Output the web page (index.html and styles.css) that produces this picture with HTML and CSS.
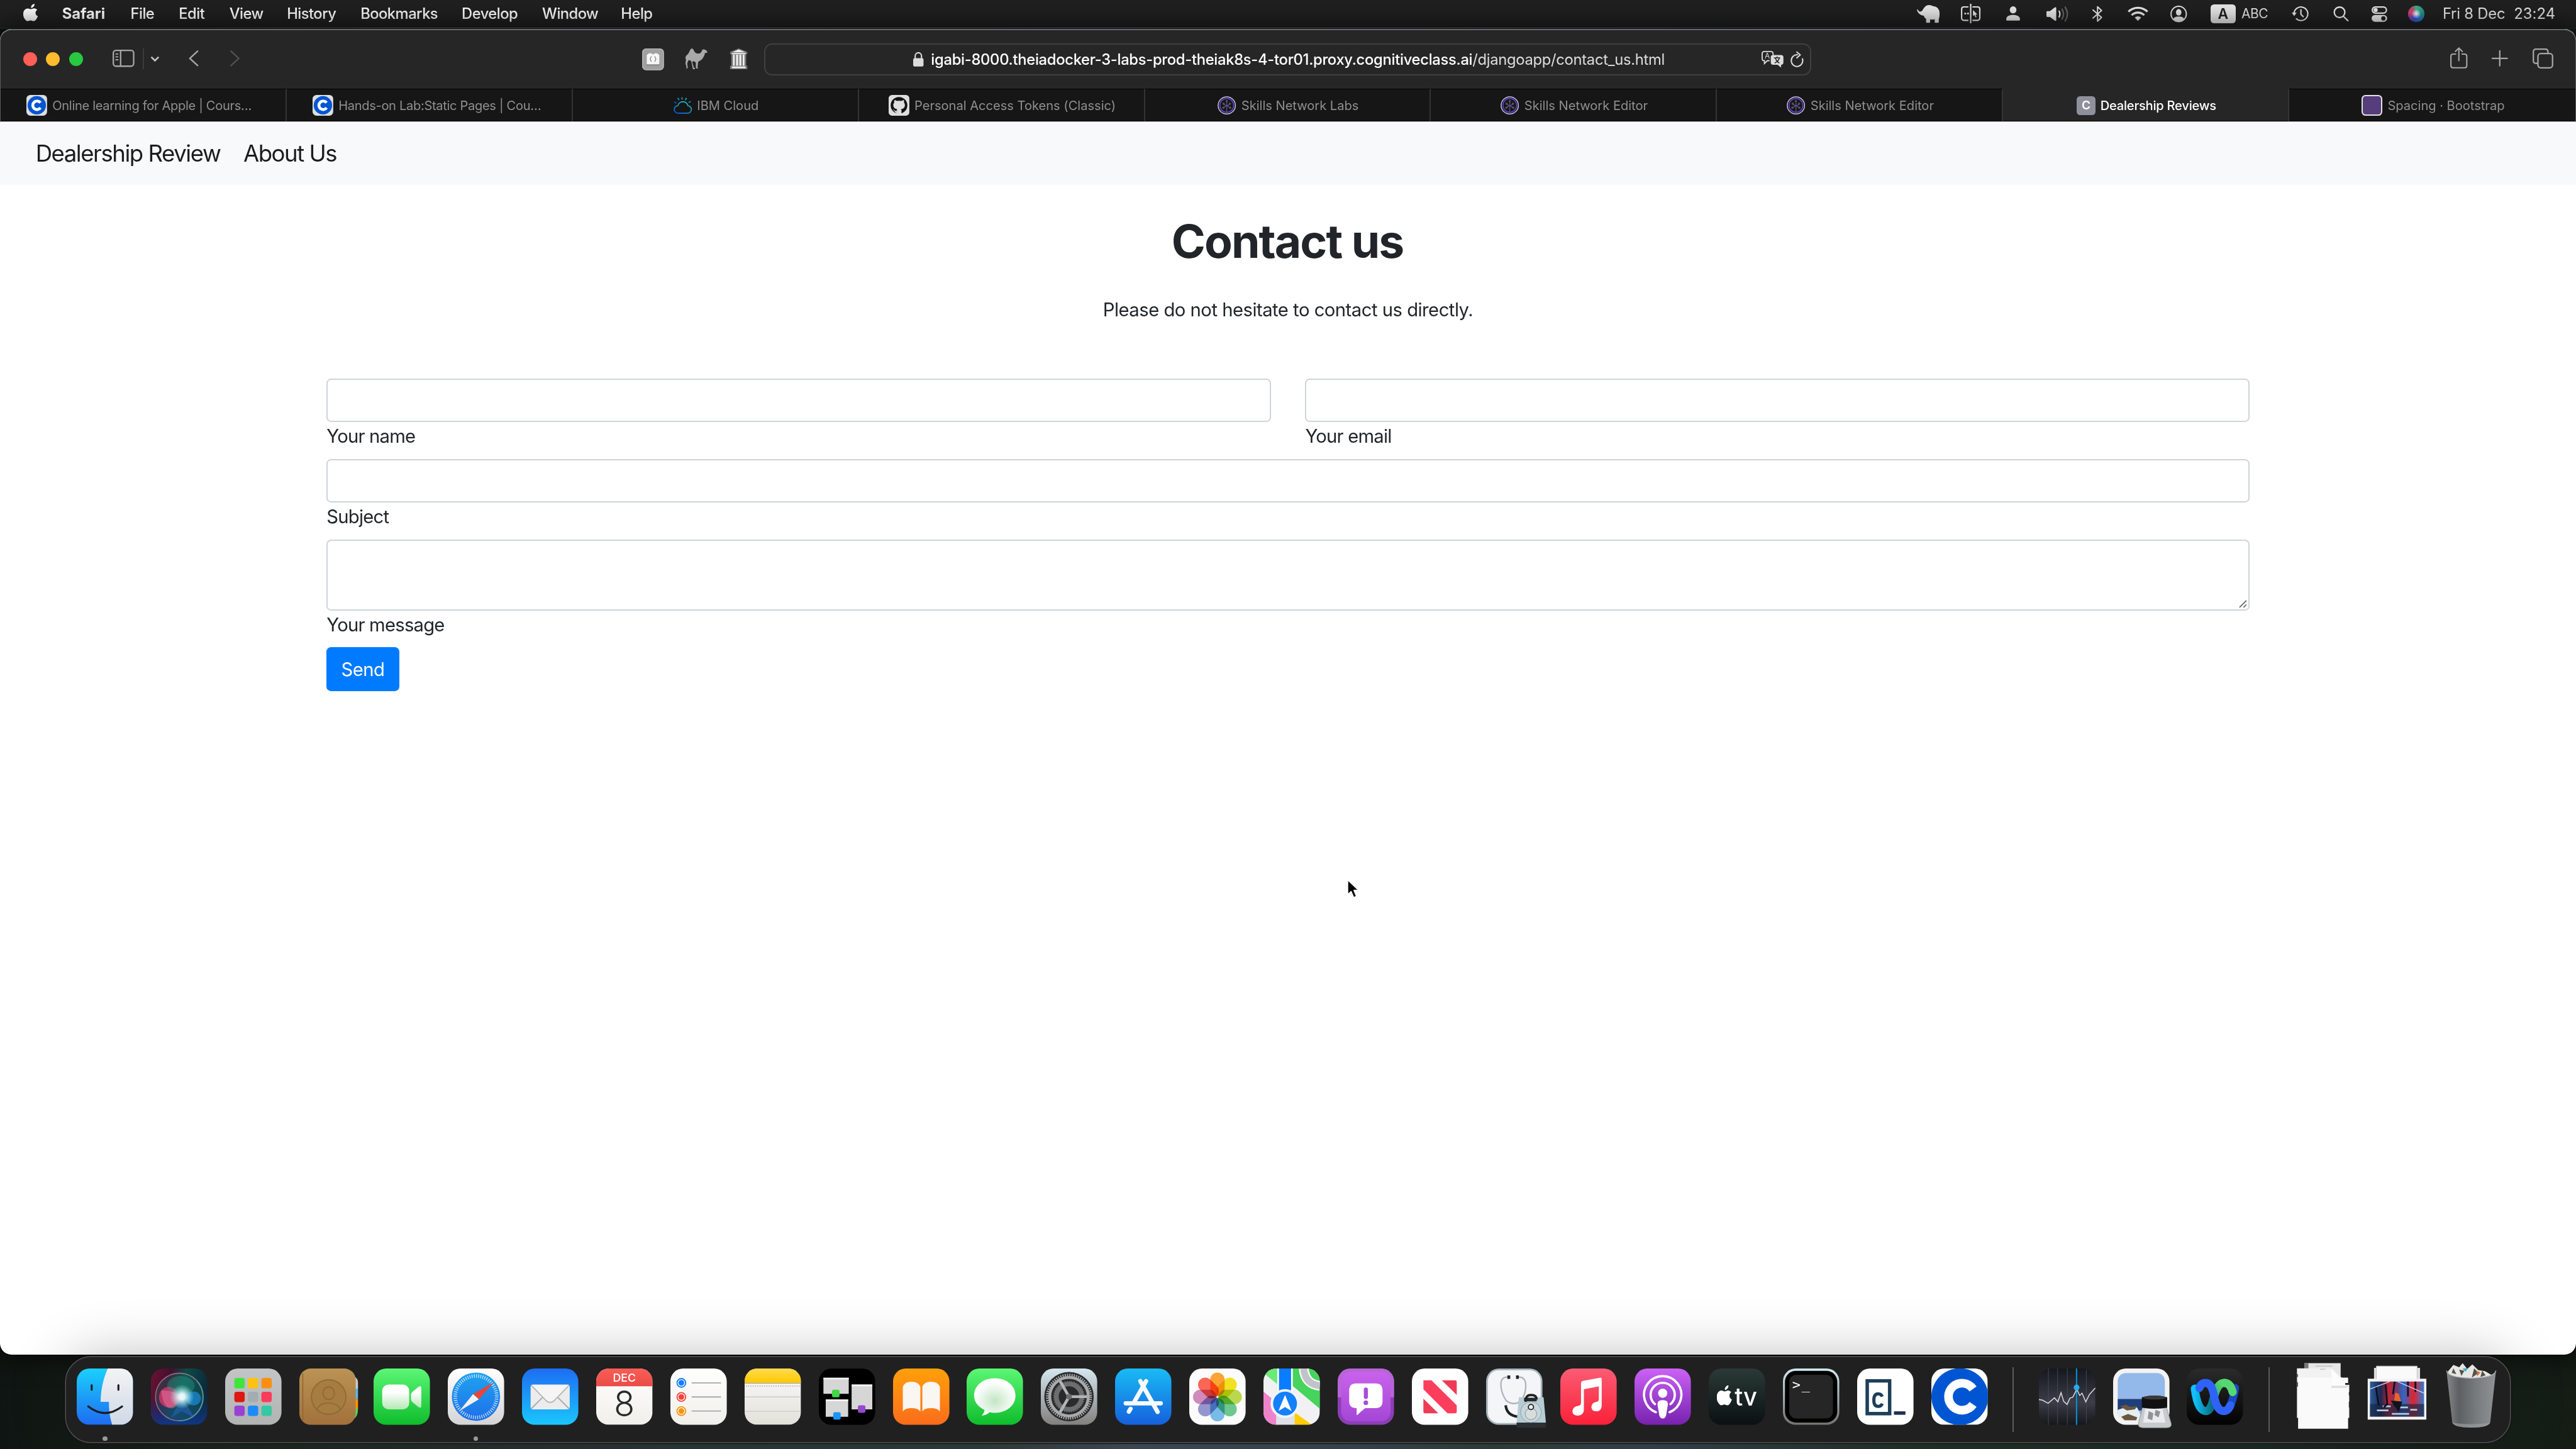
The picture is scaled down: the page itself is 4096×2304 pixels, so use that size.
FILE: index.html
```html
<!DOCTYPE html>
<html lang="en">
<head>
<meta charset="utf-8">
<title>Dealership Reviews</title>
<link rel="stylesheet" href="styles.css">
</head>
<body>
<div class="desktop">
<svg class="defs" width="0" height="0" aria-hidden="true">
  <defs>
    <linearGradient id="gFinder" x2="0" y2="1"><stop stop-color="#1bd0fd"/><stop offset="1" stop-color="#1e6bf1"/></linearGradient>
    <linearGradient id="gFinderR" x2="0" y2="1"><stop stop-color="#f3f3f5"/><stop offset="1" stop-color="#cfd9e6"/></linearGradient>
    <linearGradient id="gSiri" x2="1" y2=".25"><stop stop-color="#6d1233"/><stop offset=".35" stop-color="#43102f"/><stop offset=".6" stop-color="#0e4a46"/><stop offset="1" stop-color="#0b2a3c"/></linearGradient>
    <linearGradient id="gSiriB" x2="0" y2="1"><stop offset=".5" stop-color="#10307a" stop-opacity="0"/><stop offset="1" stop-color="#123584"/></linearGradient>
    <radialGradient id="gGlow"><stop stop-color="#fff"/><stop offset=".25" stop-color="#eafcff"/><stop offset="1" stop-color="#9ff" stop-opacity="0"/></radialGradient>
    <linearGradient id="gGrey" x2="0" y2="1"><stop stop-color="#c3c4c5"/><stop offset="1" stop-color="#b2b3b3"/></linearGradient>
    <linearGradient id="gBrown" x2="0" y2="1"><stop stop-color="#bb9355"/><stop offset="1" stop-color="#a1713b"/></linearGradient>
    <linearGradient id="gGreen" x2="0" y2="1"><stop stop-color="#5bf675"/><stop offset="1" stop-color="#0fbd2c"/></linearGradient>
    <linearGradient id="gWhite" x2="0" y2="1"><stop stop-color="#fff"/><stop offset="1" stop-color="#d4d4d4"/></linearGradient>
    <linearGradient id="gCam" x2="0" y2="1"><stop offset=".3" stop-color="#fff"/><stop offset="1" stop-color="#b5e8b6"/></linearGradient>
    <linearGradient id="gCompass" x2="0" y2="1"><stop stop-color="#1fa3f1"/><stop offset="1" stop-color="#1f6fe8"/></linearGradient>
    <linearGradient id="gMail" x2="0" y2="1"><stop stop-color="#1d6df3"/><stop offset="1" stop-color="#1bc6fd"/></linearGradient>
    <linearGradient id="gRed" x2="0" y2="1"><stop stop-color="#fc5d57"/><stop offset="1" stop-color="#e94c46"/></linearGradient>
    <linearGradient id="gPaper" x2="0" y2="1"><stop stop-color="#fff"/><stop offset="1" stop-color="#f0efea"/></linearGradient>
    <linearGradient id="gYellow" x2="0" y2="1"><stop stop-color="#ffdb4f"/><stop offset="1" stop-color="#ffc800"/></linearGradient>
    <linearGradient id="gNote" x2="0" y2="1"><stop stop-color="#fbfaf9"/><stop offset="1" stop-color="#e2e1da"/></linearGradient>
    <linearGradient id="gOrange" x2="0" y2="1"><stop stop-color="#ffa00b"/><stop offset="1" stop-color="#fb6c1b"/></linearGradient>
    <linearGradient id="gGear" x2="0" y2="1"><stop stop-color="#d6e6ef"/><stop offset="1" stop-color="#82807e"/></linearGradient>
    <radialGradient id="gBubble" cy=".6"><stop stop-color="#c3e6c4"/><stop offset="1" stop-color="#fff"/></radialGradient>
    <linearGradient id="gStore" x2="0" y2="1"><stop stop-color="#19bbf4"/><stop offset="1" stop-color="#1560dd"/></linearGradient>
    <linearGradient id="gPurple" x2="0" y2="1"><stop stop-color="#c962ec"/><stop offset="1" stop-color="#a447d6"/></linearGradient>
    <linearGradient id="gPod" x2="0" y2="1"><stop stop-color="#cb62f6"/><stop offset="1" stop-color="#7722ae"/></linearGradient>
    <linearGradient id="gMusic" x2="0" y2="1"><stop stop-color="#fb5c74"/><stop offset="1" stop-color="#fa2138"/></linearGradient>
    <linearGradient id="gTv" x2="0" y2="1"><stop stop-color="#2a3a35"/><stop offset="1" stop-color="#0b1013"/></linearGradient>
    <linearGradient id="gTerm" x2="0" y2="1"><stop stop-color="#cfe9f0"/><stop offset="1" stop-color="#74726f"/></linearGradient>
    <linearGradient id="gVoice" x2="0" y2="1"><stop stop-color="#15181d"/><stop offset=".6" stop-color="#3b3d49"/><stop offset="1" stop-color="#15171b"/></linearGradient>
    <linearGradient id="gWebex" x2="0" y2="1"><stop stop-color="#2b2b2b"/><stop offset="1" stop-color="#020202"/></linearGradient>
    <linearGradient id="gCyan" x2="1" y2="0"><stop stop-color="#0fc0fa"/><stop offset="1" stop-color="#0a6a76"/></linearGradient>
    <linearGradient id="gLime" x1="0" y1="1" x2="1" y2="0"><stop stop-color="#0b8f87"/><stop offset="1" stop-color="#6be563"/></linearGradient>
    <linearGradient id="gCloud" x1="0" y1="1" x2=".6" y2="0"><stop stop-color="#0f4fd0"/><stop offset="1" stop-color="#23b3b0"/></linearGradient>
    <linearGradient id="gTrash" x2="1" y2="0"><stop stop-color="#85898c"/><stop offset=".25" stop-color="#5c6063"/><stop offset=".6" stop-color="#777b7e"/><stop offset="1" stop-color="#8f9396"/></linearGradient>
    <linearGradient id="gScene" x2="1" y2="0"><stop stop-color="#2a5c9c"/><stop offset=".2" stop-color="#1b2850"/><stop offset=".35" stop-color="#c32434"/><stop offset=".5" stop-color="#6d3a6a"/><stop offset=".62" stop-color="#2b68c8"/><stop offset=".8" stop-color="#e3222b"/><stop offset="1" stop-color="#2f7ad0"/></linearGradient>
    <clipPath id="sq"><rect width="98" height="98" rx="22"/></clipPath>
    <symbol id="coursera" viewBox="0 0 36 36"><rect width="36" height="36" rx="7" fill="#dedede"/><circle cx="18" cy="18" r="16" fill="#0056d2"/><path d="M24.4 13.6A7.4 7.4 0 1 0 24.4 22.4" fill="none" stroke="#fff" stroke-width="5"/></symbol>
    <symbol id="skills" viewBox="0 0 32 32"><g fill="none"><circle cx="16" cy="16" r="15" stroke="#c9c3ea" stroke-width="1.6"/><circle cx="16" cy="16" r="12" stroke="#6344c9" stroke-width="1.8"/><path d="M16 9v18M10 20l6-4 6 4M11 14l5 3 5-3" stroke="#55518a" stroke-width="1.6"/></g><g fill="#55565c"><circle cx="16" cy="8.500" r="2"/><circle cx="10.500" cy="13" r="2"/><circle cx="21.500" cy="13" r="2"/><circle cx="10" cy="20" r="2"/><circle cx="22" cy="20" r="2"/></g></symbol>
    <symbol id="apple" viewBox="0 0 28 32"><path d="M19.600 0c.2 2.200-.7 4-1.900 5.300-1.200 1.400-2.700 2-4.200 1.900-.2-2 .7-3.800 1.800-5C16.500 1 18.200.1 19.600 0zM24.300 10.700c-2 1.200-3 3-3 5.200 0 2.600 1.600 4.700 4 5.600-.5 1.600-1.300 3.200-2.300 4.700-1.400 2.100-2.900 4-5.100 4-2.100 0-2.800-1.200-5.200-1.200-2.500 0-3.300 1.200-5.300 1.200-2.200 0-3.800-2.200-5.200-4.200C-.6 21.700-1 15 1.800 11.300c1.500-2 3.700-3.200 5.900-3.200 2.300 0 3.800 1.300 5.600 1.300s3.100-1.400 5.700-1.400c1.900 0 4 1 5.300 2.700z" fill="currentColor"/></symbol>
  </defs>
</svg>

<header class="menubar">
  <svg class="apple" width="28" height="32"><use href="#apple"/></svg>
  <nav class="menus">
    <span class="app-name">Safari</span><span>File</span><span>Edit</span><span>View</span><span>History</span><span>Bookmarks</span><span>Develop</span><span>Window</span><span>Help</span>
  </nav>
  <div class="status">
    <svg class="w40" viewBox="0 0 40 31"><path d="M0 8.500Q.8 7 2 8.500 4 13.500 9 10 12 5 14.500 2.500 17.500 0 21 0 25 0 28 2 39.500 3 39.500 15 39.500 21 38 25v4.500q0 1.500-1.500 1.500H32q-1 0-1-1.500V25q-4 1-8 0v4.500q0 1.500-1.500 1.500h-4Q16 31 16 29.500V24Q12.500 22 12 18.500 3 18 0 8.500z" fill="currentColor"/></svg>
    <svg class="ml36 w34" viewBox="0 0 34 34"><g fill="none" stroke="currentColor" stroke-width="2.400"><path d="M17 0v34M13 5.500H5A3.800 3.800 0 0 0 1.200 9v16A3.800 3.800 0 0 0 5 28.800h8M20 5.500h9A3.800 3.800 0 0 1 32.800 9v16a3.800 3.800 0 0 1-3.800 3.800h-9"/></g><circle cx="7.500" cy="17" r="1.700" fill="currentColor"/><circle cx="12.300" cy="17" r="1.700" fill="currentColor"/><path d="M21 11l7.500 7.500-3.300.3 2 4.300-1.700.8-2-4.500-2.500 2z" fill="currentColor"/></svg>
    <svg class="ml45 w24" viewBox="0 0 24 26"><g fill="currentColor"><ellipse cx="12" cy="6.200" rx="5.800" ry="6.200"/><path d="M0 23c0-5.500 5-8 12-8s12 2.500 12 8c0 1.500-1 2-2.500 2h-19C1 25 0 24.500 0 23z"/></g></svg>
    <svg class="ml46 w38" viewBox="0 0 38 27"><path d="M1.500 8.500H6L14.500 2Q17 .8 17 3v21q0 2.200-2.500 1L6 18.500H1.500Q0 18.500 0 17v-7q0-1.500 1.500-1.500z" fill="currentColor"/><g fill="none" stroke="currentColor" stroke-width="2.400" stroke-linecap="round"><path d="M22 8.500q2.800 5 0 10"/><path d="M27 5q5.500 8.500 0 17" opacity=".35"/><path d="M32.500 1.500q8 12 0 24" opacity=".35"/></g></svg>
    <svg class="ml42 w18" viewBox="0 0 18 29"><path d="M1 7.500l15 13L9 27V2l7 6.500L1 21.500" fill="none" stroke="currentColor" stroke-width="2.200" stroke-linejoin="round" stroke-linecap="round"/></svg>
    <svg class="ml43 w36" viewBox="0 0 36 26"><g fill="none" stroke="currentColor" stroke-width="3.600"><path d="M1.500 9.500a23.300 23.300 0 0 1 33 0"/><path d="M7 15.500a15.500 15.500 0 0 1 22 0"/></g><path d="M18 25.500l-5.500-5.700a8 8 0 0 1 11 0z" fill="currentColor"/></svg>
    <svg class="ml38 w29" viewBox="0 0 29 29"><circle cx="14.500" cy="14.500" r="13.300" fill="none" stroke="currentColor" stroke-width="2.200"/><g fill="currentColor"><ellipse cx="14.500" cy="11.500" rx="4.800" ry="5.600"/><path d="M5 23.500q1.500-4.500 9.500-4.500t9.500 4.500Q20 28 14.500 28T5 23.500z"/></g></svg>
    <span class="input-src">A</span><span class="input-name">ABC</span>
    <svg class="ml43 w29" viewBox="0 0 29 26"><g fill="none" stroke="currentColor" stroke-width="2.300" stroke-linecap="round"><path d="M4 13A12 11.800 0 1 1 8 21.800"/><path d="M16 6v8l4 4"/></g><path d="M0 11h8.500L4.300 17z" fill="currentColor"/></svg>
    <svg class="ml43 w27" viewBox="0 0 27 26"><g fill="none" stroke="currentColor" stroke-width="2.600" stroke-linecap="round"><circle cx="11" cy="10.500" r="9.200"/><path d="M17.700 17.500L25.500 25"/></g></svg>
    <svg class="ml40 w27" viewBox="0 0 27 27"><rect x="1.200" y="1.200" width="24.600" height="10.600" rx="5.300" fill="none" stroke="currentColor" stroke-width="2.400"/><circle cx="7" cy="6.500" r="3.600" fill="currentColor"/><rect y="15" width="27" height="12" rx="6" fill="currentColor"/><circle cx="20.500" cy="21" r="3.800" fill="#202020"/></svg>
    <span class="siri-mini"></span>
    <span class="date">Fri 8 Dec</span><span class="time">23:24</span>
  </div>
</header>

<main class="window">
  <div class="chrome">
    <div class="toolbar">
      <span class="light red"></span><span class="light amber"></span><span class="light green"></span>
      <svg class="sidebar" width="38" height="30" viewBox="0 0 38 30"><g fill="none" stroke="#a6a6a6" stroke-width="2.500"><rect x="1.300" y="1.300" width="35.400" height="27.400" rx="4.500"/><path d="M14 1v28"/><path d="M5 7.500h5M5 12.500h5M5 17.500h5" stroke-width="2"/></g></svg>
      <span class="rule"></span>
      <svg class="chev" width="14" height="9" viewBox="0 0 14 9"><path d="M1.500 1.500L7 7l5.500-5.500" fill="none" stroke="#c4c4c4" stroke-width="3" stroke-linecap="round"/></svg>
      <svg class="back" width="17" height="28" viewBox="0 0 17 28"><path d="M15.500 1.500L2 14l13.500 12.500" fill="none" stroke="#a6a6a6" stroke-width="2.700" stroke-linecap="round" stroke-linejoin="round"/></svg>
      <svg class="fwd" width="17" height="28" viewBox="0 0 17 28"><path d="M1.500 1.500L15 14 1.500 26.500" fill="none" stroke="#505050" stroke-width="2.700" stroke-linecap="round" stroke-linejoin="round"/></svg>
      <svg class="brick" width="38" height="38" viewBox="0 0 38 38"><rect width="38" height="38" rx="7" fill="#a0a0a0"/><rect x="1" y="1" width="36" height="36" rx="6" fill="none" stroke="#b6b6b6" stroke-width="1.500"/><path d="M8 29v-17q0-2 2-2h1V8.500h6V10h4V8.500h6V10h1q2 0 2 2v17q0 1-1 1H9q-1 0-1-1z" fill="#8a8a8a"/><path d="M8 26V12q0-2 2-2h1V8.500h6V10h4V8.500h6V10h1q2 0 2 2v14q0 1.500-1.500 1.500h-19Q8 27.500 8 26z" fill="#f6f6f6"/><path d="M16.500 14c-2 0-1 4-3 4.500 2 .5 1 4.500 3 4.500M21.500 14c2 0 1 4 3 4.500-2 .5-1 4.500-3 4.500" fill="none" stroke="#777" stroke-width="1.300"/></svg>
      <svg class="camel" width="39" height="36" viewBox="0 0 39 36"><path d="M1 17c0-4 3-6 5-8 2-3 3-8 6-9 3 0 4 6 7 8 3 1 5 2 8 0 2-1 2-4 4-6 2-1 7 1 8 4 0 2-2 2-4 2-1 4-3 10-8 13-2 1-3 1-4 3l-1 9 1 2h-3l-1-2v-9l-5-2-1 3 3 9h2l-1 2h-3L11 22c-2-1-4-2-5-1l-2 5 1 7-1 2H2l1-2-2-7 1-6z" fill="#a9a9a9"/></svg>
      <svg class="museum" width="32" height="36" viewBox="0 0 32 36"><path d="M16 0l15 6v4h-2v20h2v6H1v-6h2V10H1V6z" fill="#777"/><path d="M16 2l11 4.500H5zM4 8h24v2H4zM6 11h3v19H6zM11.500 11h3.500v19h-3.500zM17 11h3.500v19H17zM23 11h3v19h-3zM4 31.500h24v3H4z" fill="#f0f0f0"/></svg>
      <div class="address">
        <svg width="18" height="25" viewBox="0 0 18 25"><rect y="10.500" width="18" height="14.500" rx="2.500" fill="#dcdcdc"/><path d="M3.500 11V6.500a5.500 5.500 0 0 1 11 0V11" fill="none" stroke="#dcdcdc" stroke-width="2.300"/></svg>
        <span class="url"><b>igabi-8000.theiadocker-3-labs-prod-theiak8s-4-tor01.proxy.cognitiveclass.ai</b>/djangoapp/contact_us.html</span>
        <svg class="translate" width="38" height="29" viewBox="0 0 38 29"><path d="M14 17h-4l-5 5v-5q-4 0-4-4V5q0-4 4-4h11q4 0 4 4v2" fill="none" stroke="#dcdcdc" stroke-width="2"/><text x="10" y="13.500" font-size="13" text-anchor="middle" fill="#dcdcdc">A</text><path d="M20 7h14q4 0 4 4v9q0 4-4 4v5l-6-5h-8q-4 0-4-4v-9q0-4 4-4z" fill="#dcdcdc"/><path d="M21.500 12h11M27 9.500V12M23 21c4-2 7-5 8-9M31 21c-4-2-6-5-7-9" fill="none" stroke="#262626" stroke-width="1.700"/></svg>
        <svg class="reload" width="23" height="27" viewBox="0 0 23 27"><path d="M20.800 12.500A10 10.200 0 1 1 12 5.600" fill="none" stroke="#dcdcdc" stroke-width="2.200" stroke-linecap="round"/><path d="M11 .8l6 5-6 5.200" fill="none" stroke="#dcdcdc" stroke-width="2.200" stroke-linecap="round" stroke-linejoin="round"/></svg>
      </div>
      <svg class="share" width="30" height="37" viewBox="0 0 30 37"><g fill="none" stroke="#a6a6a6" stroke-width="2.300" stroke-linecap="round" stroke-linejoin="round"><path d="M9.500 12H5q-3.800 0-3.800 3.800V32q0 3.800 3.800 3.800h20q3.800 0 3.800-3.800V15.800Q28.800 12 25 12h-4.500"/><path d="M15 23.500V1.500M9 7.500l6-6 6 6"/></g></svg>
      <svg class="plus" width="28" height="28" viewBox="0 0 28 28"><path d="M14 1v26M1 14h26" stroke="#a6a6a6" stroke-width="2.500" stroke-linecap="round"/></svg>
      <svg class="overview" width="36" height="35" viewBox="0 0 36 35"><g fill="none" stroke="#a6a6a6" stroke-width="2.500"><path d="M9 26H6q-4.700 0-4.700-4.700V6Q1.300 1.300 6 1.300h16Q26.700 1.300 26.700 6v3"/><rect x="9.300" y="9" width="25.400" height="24.700" rx="4.700"/></g></svg>
    </div>
    <div class="tabs">
      <div class="tab cut"><svg width="36" height="36"><use href="#coursera"/></svg><span>Online learning for Apple | Cours…</span></div>
      <div class="tab cut"><svg width="36" height="36"><use href="#coursera"/></svg><span>Hands-on Lab:Static Pages | Cou…</span></div>
      <div class="tab"><svg width="32" height="32" viewBox="0 0 32 32"><g fill="none" stroke="url(#gCloud)" stroke-width="2"><path d="M8 29.500a6.500 6.500 0 0 1-.5-13 9 9 0 0 1 17.500 0 6.500 6.500 0 0 1-1 13z"/><path d="M15 6l-.5-4M20.500 7l2-4M9.500 7l-2-4M26 11l4-2M5 12L1.500 10"/></g></svg><span>IBM Cloud</span></div>
      <div class="tab"><svg width="36" height="36" viewBox="0 0 36 36"><rect width="36" height="36" rx="6" fill="#dedede"/><circle cx="18" cy="18" r="14.500" fill="#111"/><path d="M14 33v-5c-4 1-4.500-2.500-6.500-3M22 33v-6c0-1-.3-2-1-2.500 4-.5 7-2 7-7 0-2-.6-3-1.600-4 .3-1.500.3-3-.2-4.300-1.500 0-3 .7-4.200 1.600a14 14 0 0 0-7.600 0c-1.200-.9-2.700-1.600-4.200-1.600-.5 1.300-.5 2.800-.2 4.300-1 1-1.600 2-1.600 4 0 5 3 6.500 7 7-.7.6-1 1.500-1 2.500v6z" fill="#dedede" stroke="#dedede" stroke-width=".6"/></svg><span>Personal Access Tokens (Classic)</span></div>
      <div class="tab"><svg width="32" height="32"><use href="#skills"/></svg><span>Skills Network Labs</span></div>
      <div class="tab"><svg width="32" height="32"><use href="#skills"/></svg><span>Skills Network Editor</span></div>
      <div class="tab"><svg width="32" height="32"><use href="#skills"/></svg><span>Skills Network Editor</span></div>
      <div class="tab active"><i class="letter">C</i><span>Dealership Reviews</span></div>
      <div class="tab"><i class="boot"></i><span>Spacing · Bootstrap</span></div>
    </div>
  </div>

  <nav class="navbar"><a>Dealership Review</a><a>About Us</a></nav>
  <section class="page">
    <h1>Contact us</h1>
    <p>Please do not hesitate to contact us directly.</p>
    <form>
      <div class="row">
        <div class="field"><input type="text"><label>Your name</label></div>
        <div class="field"><input type="text"><label>Your email</label></div>
      </div>
      <div class="field"><input type="text"><label>Subject</label></div>
      <div class="field">
        <div class="area"><svg width="14" height="14" viewBox="0 0 14 14"><path d="M1 13L13 1M8 13l5-5" stroke="#5c5c5c" stroke-width="1.700"/></svg></div>
        <label>Your message</label>
      </div>
      <button type="button">Send</button>
    </form>
  </section>
  <svg class="cursor" width="24" height="36" viewBox="0 0 24 36"><path d="M2 2v26l6-5.500 4.500 10.500 5-2-4.500-10.500h8.500z" fill="#000" stroke="#fff" stroke-width="2" stroke-linejoin="round"/></svg>
</main>

<footer class="dock">
  <div class="app running"><svg viewBox="0 0 98 98"><g clip-path="url(#sq)"><path d="M0 0h98v98H0z" fill="url(#gFinder)"/><path d="M54 0C46 18 42 36 41.500 58H56q-.5 20 5.500 40H98V0z" fill="url(#gFinderR)"/></g><path d="M26 29v8M72.500 29v8M20 66q29 23 59 0" fill="none" stroke="#1b1c20" stroke-width="3.400" stroke-linecap="round"/></svg></div>
  <div class="app"><svg viewBox="0 0 98 98"><g clip-path="url(#sq)"><path d="M0 0h98v98H0z" fill="url(#gSiri)"/><path d="M0 0h98v98H0z" fill="url(#gSiriB)"/></g><circle cx="49.500" cy="49.500" r="41.500" fill="#1c6a68" fill-opacity=".35" stroke="#b98a9a" stroke-opacity=".7" stroke-width="1.800"/><path d="M49.500 91A41.500 41.500 0 0 0 80 22" fill="none" stroke="#3ab0a6" stroke-opacity=".7" stroke-width="1.800"/><ellipse cx="31" cy="50" rx="17" ry="18" fill="#d8356b" opacity=".8"/><ellipse cx="74" cy="52" rx="13" ry="12" fill="#1a8de0" opacity=".7"/><ellipse cx="52" cy="30" rx="24" ry="17" fill="#28a58d" opacity=".35"/><path d="M18 38q24 0 36 12Q44 74 30 68 20 62 18 38z" fill="#f28bb4" opacity=".4"/><path d="M54 50l-19 36 18-12 23 12z" fill="#2f6fe0" opacity=".4"/><circle cx="54" cy="49" r="21" fill="url(#gGlow)" opacity=".95"/></svg></div>
  <div class="app"><svg viewBox="0 0 98 98"><rect width="98" height="98" rx="22" fill="url(#gGrey)"/><g><rect x="16" y="16.500" width="18" height="18" rx="4" fill="#3fe53a"/><rect x="39.500" y="16.500" width="18" height="18" rx="4" fill="#fdc112"/><rect x="63" y="16.500" width="18" height="18" rx="4" fill="#f98f12"/><rect x="16" y="40.500" width="18" height="18" rx="4" fill="#dd1712"/><rect x="39.500" y="40.500" width="18" height="18" rx="4" fill="#a3adb1"/><rect x="63" y="40.500" width="18" height="18" rx="4" fill="#fb3b5c"/><rect x="16" y="64.500" width="18" height="18" rx="4" fill="#9a40d4"/><rect x="39.500" y="64.500" width="18" height="18" rx="4" fill="#1c8bf8"/><rect x="63" y="64.500" width="18" height="18" rx="4" fill="#34c9a2"/></g></svg></div>
  <div class="app"><svg viewBox="0 0 98 98"><path d="M90 14h6q6 4 6 10v11H90z" fill="#c9c9c9"/><path d="M90 35h12v18H90z" fill="#54b9ee"/><path d="M90 53h12v17H90z" fill="#ff9408"/><path d="M90 70h12q0 14-8 18h-4z" fill="#4cd964"/><rect width="98" height="98" rx="20" fill="url(#gBrown)"/><path d="M6 8v82" stroke="#8a6434" stroke-width="1.500"/><g fill="#a67c41" stroke="#8d6a36" stroke-width="2"><circle cx="51" cy="49.500" r="30"/><ellipse cx="51" cy="43" rx="10" ry="11"/><path d="M30.500 71q5-11 20.500-11t20.500 11Q64 79.500 51 79.500T30.500 71z"/></g></svg></div>
  <div class="app"><svg viewBox="0 0 98 98"><rect width="98" height="98" rx="22" fill="url(#gGreen)"/><rect x="15" y="28" width="47" height="43" rx="11" fill="url(#gCam)"/><path d="M65 46q0-3 2-5l11-9q5-3 5 2v31q0 5-5 2l-11-9q-2-2-2-5z" fill="url(#gCam)"/></svg></div>
  <div class="app running"><svg viewBox="0 0 98 98"><rect width="98" height="98" rx="22" fill="url(#gWhite)"/><circle cx="49" cy="49" r="42" fill="url(#gCompass)"/><circle cx="49" cy="49" r="36" fill="none" stroke="#d9ecfc" stroke-width="6" stroke-dasharray="1.300 2.470"/><path d="M80 24L44 44.500l10 9z" fill="#e8453a"/><path d="M20 74l24-29.500 10 9z" fill="#f1f1f1"/></svg></div>
  <div class="app"><svg viewBox="0 0 98 98"><rect width="98" height="98" rx="22" fill="url(#gMail)"/><rect x="15" y="28" width="68" height="43" rx="4" fill="#ececec"/><path d="M16 70l22-22M82 70L60 48" stroke="#a9a9a9" stroke-width="2"/><path d="M16 29l26 27q7 6 14 0l26-27" fill="#f5f5f5" stroke="#b5b5b5" stroke-width="2"/></svg></div>
  <div class="app"><svg viewBox="0 0 98 98"><g clip-path="url(#sq)"><path d="M0 0h98v98H0z" fill="url(#gPaper)"/><path d="M0 0h98v31H0z" fill="url(#gRed)"/></g><text x="49" y="23.500" font-size="19.500" font-weight="500" text-anchor="middle" fill="#fff" textLength="40">DEC</text><text x="49" y="83" font-size="61" font-weight="300" text-anchor="middle" fill="#2a2a2a" textLength="36" lengthAdjust="spacingAndGlyphs">8</text></svg></div>
  <div class="app"><svg viewBox="0 0 98 98"><rect width="98" height="98" rx="22" fill="url(#gPaper)"/><path d="M37 25h51M37 49.500h51M37 74h51" stroke="#a7a6ac" stroke-width="2"/><g fill="#fff" stroke-width="2"><circle cx="19" cy="25" r="7.500" stroke="#157efb"/><circle cx="19" cy="49.500" r="7.500" stroke="#f4423a"/><circle cx="19" cy="74" r="7.500" stroke="#f39412"/></g><circle cx="19" cy="25" r="5" fill="#157efb"/><circle cx="19" cy="49.500" r="5" fill="#f4423a"/><circle cx="19" cy="74" r="5" fill="#f39412"/></svg></div>
  <div class="app"><svg viewBox="0 0 98 98"><g clip-path="url(#sq)"><path d="M0 0h98v98H0z" fill="url(#gNote)"/><path d="M0 0h98v25H0z" fill="url(#gYellow)"/><path d="M0 25.500h98" stroke="#aaa08a" stroke-width="1.500"/><path d="M2 30.500h96" stroke="#bdbbb6" stroke-width="2" stroke-dasharray="2 2"/><path d="M0 49.500h98M0 74.500h98" stroke="#cdccca" stroke-width="1.600"/></g></svg></div>
  <div class="app"><svg viewBox="0 0 98 98"><rect width="98" height="98" rx="22" fill="#000"/><g fill="#d6d6d6"><path d="M8 16h44v28H8zM57 28h36v43H57zM12 54h39v30H12z"/></g><g fill="#f5f5f5"><path d="M8 16h44v3H8zM57 28h36v3H57zM12 54h39v3H12z"/></g><rect x="23" y="37" width="13" height="13" rx="3" fill="#3fd844"/><rect x="68" y="64" width="13" height="13" rx="3" fill="#9449cf"/><rect x="25" y="76" width="13" height="13" rx="3" fill="#1c94f8"/></svg></div>
  <div class="app"><svg viewBox="0 0 98 98"><rect width="98" height="98" rx="22" fill="url(#gOrange)"/><path d="M17 75V32q3-9 15-9t15.500 9v43q-4-6-15.500-6T17 75zM51 75V32q3-9 15-9t15.500 9v43q-4-6-15.500-6T51 75z" fill="#faf6f2"/></svg></div>
  <div class="app"><svg viewBox="0 0 98 98"><rect width="98" height="98" rx="22" fill="url(#gGreen)"/><path d="M49 17c21 0 36 13 36 30S70 77 49 77q-5 0-9-1-5 5-14 6 5-5 5-10-18-9-18-25c0-17 15-30 36-30z" fill="url(#gBubble)"/></svg></div>
  <div class="app"><svg viewBox="0 0 98 98"><rect width="98" height="98" rx="22" fill="url(#gGear)"/><circle cx="49" cy="49" r="43" fill="#2a2b2d"/><g fill="none" stroke="#a9aaab"><circle cx="49" cy="49" r="37.500" stroke-width="5" stroke-dasharray="2 1.930"/><circle cx="49" cy="49" r="33.500" stroke-width="5"/><circle cx="49" cy="49" r="22" stroke="#6d6e70" stroke-width="8"/><circle cx="49" cy="49" r="26.500" stroke="#6d6e70" stroke-width="2" stroke-dasharray="2 2"/><path d="M49 49h31M49 49L33.500 22M49 49L33.500 76" stroke="#b4b5b6" stroke-width="5"/></g><circle cx="49" cy="49" r="5" fill="#6b6c6e"/></svg></div>
  <div class="app"><svg viewBox="0 0 98 98"><rect width="98" height="98" rx="22" fill="url(#gStore)"/><g stroke="#f6fafd" stroke-width="7.500" stroke-linecap="round"><path d="M54 22L33.500 58M44 22L74 75.500M18.500 60.500h61M27 70l-3 5"/></g></svg></div>
  <div class="app"><svg viewBox="0 0 98 98"><rect width="98" height="98" rx="22" fill="#fcfcfc"/><g class="petals"><rect x="36.500" y="7" width="25" height="41" rx="12.500" fill="#fb9c23"/><rect x="36.500" y="7" width="25" height="41" rx="12.500" fill="#f0df0e" transform="rotate(45 49 49.500)"/><rect x="36.500" y="7" width="25" height="41" rx="12.500" fill="#b3d53f" transform="rotate(90 49 49.500)"/><rect x="36.500" y="7" width="25" height="41" rx="12.500" fill="#62c283" transform="rotate(135 49 49.500)"/><rect x="36.500" y="7" width="25" height="41" rx="12.500" fill="#6fb4e4" transform="rotate(180 49 49.500)"/><rect x="36.500" y="7" width="25" height="41" rx="12.500" fill="#8b8ecb" transform="rotate(225 49 49.500)"/><rect x="36.500" y="7" width="25" height="41" rx="12.500" fill="#ca82b6" transform="rotate(270 49 49.500)"/><rect x="36.500" y="7" width="25" height="41" rx="12.500" fill="#fb5a48" transform="rotate(315 49 49.500)"/></g></svg></div>
  <div class="app"><svg viewBox="0 0 98 98"><g clip-path="url(#sq)"><path d="M0 0h98v98H0z" fill="#f1f1f3"/><path d="M0 0h30v32L0 8z" fill="#6bea77"/><path d="M48 0h50v70L48 28z" fill="#45d45c"/><path d="M0 40l26 22v36H0z" fill="#ee83cc"/><path d="M54 76l30 22H54z" fill="#ffcc05"/><path d="M22 40h32v58H22z" fill="#dfe0e8"/><path d="M24 0h27v50H24z" fill="#fff"/><path d="M27 0h21v50H27z" fill="#0a7cff"/><path d="M70 0q2 27 28 30" fill="none" stroke="#fff" stroke-width="17"/><path d="M70 0q2 27 28 30" fill="none" stroke="#c2c3c9" stroke-width="12"/></g><circle cx="37.500" cy="61" r="23" fill="#1480fc" stroke="#f2f4f8" stroke-width="4.500"/><path d="M37.500 46L49 74l-11.500-7L26 74z" fill="#fff"/></svg></div>
  <div class="app"><svg viewBox="0 0 98 98"><rect width="98" height="98" rx="22" fill="#8b3fb5"/><path d="M0 50V22A22 22 0 0 1 22 0h54a22 22 0 0 1 22 22v28z" fill="#b765d5"/><rect x="6" y="6" width="86" height="86" rx="17" fill="url(#gPurple)"/><path d="M32 26h34q12 0 12 12v19q0 12-12 12H48q-8 6-14 12-2 0-1-3v-9h-1q-12 0-12-12V38q0-12 12-12z" fill="#fff"/><rect x="45.500" y="33" width="7" height="20" rx="3.500" fill="#a94cd8"/><circle cx="49" cy="59.500" r="4" fill="#a94cd8"/></svg></div>
  <div class="app"><svg viewBox="0 0 98 98"><rect width="98" height="98" rx="22" fill="#fff"/><path d="M20 20.500h14L78 64v11q0 3-3 3H62L20 36z" fill="#fc3e5d"/><path d="M52 20.500h23q3 0 3 3V46zM20 52.500L46 78H23q-3 0-3-3z" fill="#ee3c57"/></svg></div>
  <div class="app"><svg viewBox="0 0 98 98"><rect width="98" height="98" rx="22" fill="#a6b4bb"/><rect x="3" y="3" width="92" height="92" rx="19" fill="#f3f5f7"/><g fill="none"><path d="M38 15Q24 14 26 32q1 12 9 24 14 10 26 0 8-12 8-26 0-16-13-15" stroke="#aeb3b8" stroke-width="2.500"/><path d="M34 64q2 18 22 20" stroke="#202224" stroke-width="4.500"/></g><path d="M37 12h5v6h-5zM52 12h5v6h-5z" fill="#202224"/><path d="M57 50h43l4 44H53z" fill="#b7cbd3"/><path d="M53 94h51v7q0 2-2 2H55q-2 0-2-2z" fill="#2d3033"/><path d="M66 51h22v6H66z" fill="#26292b"/><circle cx="78" cy="76" r="18" fill="#c5d6dc" stroke="#8da0a8"/><path d="M69 58q-1-12 9-12t10 8" fill="none" stroke="#202224" stroke-width="4"/><circle cx="78" cy="79" r="10" fill="#d9dcdd" stroke="#82898d"/><circle cx="78" cy="67" r="4.500" fill="#eee" stroke="#202224" stroke-width="2"/></svg></div>
  <div class="app"><svg viewBox="0 0 98 98"><rect width="98" height="98" rx="22" fill="url(#gMusic)"/><path d="M36 25.500q0-3 3-4L69 16q3-.5 3 2.500V64q0 10-9 10.500-8 0-9-7 0-8 9-9.500 4-1 4-4V31L41 36v36q0 9-10 10-10 0-10-8 1-8 10-9 5-1 5-5z" fill="#fff"/></svg></div>
  <div class="app"><svg viewBox="0 0 98 98"><rect width="98" height="98" rx="22" fill="url(#gPod)"/><g fill="none" stroke="#fff" stroke-width="4" stroke-linecap="round"><path d="M37 76a32.500 32.500 0 1 1 24 0"/><path d="M35.500 62a21 21 0 1 1 27 0"/></g><circle cx="49" cy="43" r="8" fill="#fff"/><path d="M49 55q10 0 9 8l-3 18q-1 6-6 6t-6-6l-3-18q-1-8 9-8z" fill="#fff"/></svg></div>
  <div class="app"><svg viewBox="0 0 98 98"><rect width="98" height="98" rx="22" fill="url(#gTv)"/><svg x="14" y="29" width="29" height="37" viewBox="0 0 28 32" preserveAspectRatio="none" color="#fff"><use href="#apple" width="28" height="32"/></svg><text x="45" y="65" font-size="43" font-weight="500" fill="#fff" textLength="39" lengthAdjust="spacingAndGlyphs">tv</text></svg></div>
  <div class="app"><svg viewBox="0 0 98 98"><rect width="98" height="98" rx="22" fill="url(#gTerm)"/><rect x="3.500" y="4" width="91" height="90" rx="19" fill="#000"/><rect x="11" y="11" width="76" height="76" rx="12" fill="#262626"/><text class="mono" x="16" y="36" font-size="24" fill="#fff" textLength="31">&gt;_</text></svg></div>
  <div class="app"><svg viewBox="0 0 98 98"><rect width="98" height="98" rx="22" fill="#fff"/><rect x="17.500" y="21.500" width="39" height="57" fill="none" stroke="#1f3f58" stroke-width="6"/><path d="M64 77.500h20" stroke="#1f2f52" stroke-width="6"/><path d="M43.500 49q-1.500-5-7-5-7.500 0-7.500 11t7.500 11q5.500 0 7-5" fill="none" stroke="#1f3f58" stroke-width="5.500"/></svg></div>
  <div class="app"><svg viewBox="0 0 98 98"><g clip-path="url(#sq)"><path d="M0 0h98v98H0z" fill="#fff"/><circle cx="49.500" cy="49" r="49.500" fill="#0056d2"/></g><path d="M72.500 35.500A23.500 23.500 0 1 0 72.500 62.500" fill="none" stroke="#fff" stroke-width="15"/></svg></div>
  <span class="sep"></span>
  <div class="app"><svg viewBox="0 0 98 98"><rect width="98" height="98" rx="22" fill="url(#gVoice)"/><path d="M16.500 0v98M32.500 0v98M49.500 0v98M82.500 2v94" stroke="#4a4c56" stroke-width="1"/><path d="M65.500 0v98" stroke="#0a8fd6" stroke-width="2.300"/><path d="M0 54l6 1 10 5.500L27 51l6 7 5.500-16L43 57l6 5.500 5-11 5-1.500 7-14 5 11 4-4 6.500 15L88 45l10-11" fill="none" stroke="#dadada" stroke-width="1.700"/><circle cx="65.500" cy="33" r="5" fill="#2aa9ee"/></svg></div>
  <div class="app"><svg viewBox="0 0 98 98"><rect width="98" height="98" rx="22" fill="#f3f3f3"/><g><rect x="8" y="8" width="82" height="82" rx="14" fill="#93b9ea"/><path d="M8 53h82v20H8z" fill="#1f3f7a"/><path d="M8 72q20-8 34-4l10 22H22Q8 90 8 76z" fill="#e6edf0"/><path d="M12 66l10-3 8 4 12-2-4 6-14 2zM14 84l12-5 16 6-2 5H20z" fill="#6b5540"/></g><path d="M51 68h42l8 28q1 7-8 7H52q-9 0-8-7z" fill="#c7cbce" stroke="#8b8f92"/><path d="M56 70h30l5 24H52z" fill="#e9ebec"/><path d="M62 74l8 4-2 12-8-3zM74 72l8 3-3 10-7-4z" fill="#8d9398"/><path d="M50 50q22-6 44 0v18q-22 4-44 0z" fill="#111"/><ellipse cx="72" cy="50.500" rx="20" ry="3.500" fill="#3a3a3a"/></svg></div>
  <div class="app"><svg viewBox="0 0 98 98"><rect width="98" height="98" rx="22" fill="url(#gWebex)"/><g fill="none" stroke-width="14" stroke-linecap="round"><path d="M80 41q-4-16-15-16-12 0-18 27-5 22-14 22" stroke="url(#gLime)"/><path d="M14 35q5 39 19 39 9 0 13-20" stroke="url(#gCyan)"/><path d="M84 34q-6 40-20 40" stroke="#1b49c4"/><path d="M22 34q3-9 11-9 11 0 15 25 5 24 16 24 8 0 12-10" stroke="#2f62f8"/><path d="M65 25q11 0 15 16" stroke="#55d873"/></g></svg></div>
  <span class="sep"></span>
  <svg class="stack" viewBox="0 0 129 130"><path d="M33 5h63v30H33z" fill="#e6e6e6"/><path d="M33 5h7v10h-7z" fill="#777"/><path d="M20 14h60l31 28v58H20z" fill="#f2f2f2"/><path d="M22 30h87v89H22z" fill="#fafafa"/><path d="M80 12q4 20 30 32l-4 4H80z" fill="#e0e0e0"/><path d="M80 14v30h26z" fill="#fdfdfd"/><path d="M104 40h7v2h-7M21 24v5M21 38v8M111 55v6M111 72v10" stroke="#333" stroke-width="1.500"/><path d="M60 15.500h10M52 10h30" stroke="#aaa"/></svg>
  <svg class="stack" viewBox="0 0 129 130"><path d="M25 13h80v30H25z" fill="#e0e0e0"/><path d="M29 10h71v30H29z" fill="#fafafa" stroke="#bbb"/><path d="M14 32h102v71H14z" fill="#f3f3f3"/><path d="M18 37h94v61H18z" fill="url(#gScene)"/><path d="M18 76h94v22H18z" fill="#18253f" opacity=".65"/><path d="M40 80h14M64 82h20M30 87h20M56 93h30M88 86h12" stroke="#b4cbe0" stroke-width="3"/><path d="M28 44l5 34M45 42l3 34-6 6M61 37l-3 22M84 37v26M97 37v18" stroke="#0b1020" stroke-width="3" fill="none"/><path d="M18 50l34-13M66 37l46 20" stroke="#c9d9ea" stroke-width="1.500"/><path d="M62 56l6 2 4 14-12-2z" fill="#e8632f"/><path d="M54 70l20 2-6 18z" fill="#10131c"/></svg>
  <svg class="stack" viewBox="0 0 129 130"><path d="M24 20L34 8l10 4 6-7 8 10 9-8 10 10 12 2 14 8-8 10H34z" fill="#e6e6e3"/><path d="M44 16l9 2-5 9zM70 14l8 8-12 8zM34 14l5 10-8-2zM84 18l6 8-9 3z" fill="#55504c"/><path d="M50 14h9l-4 6z" fill="#2fb3c9"/><path d="M74 18l7 3-6 7z" fill="#c9743a"/><path d="M22 18q2 12 43 13 41-1 43-13L98 108q-3 9-33 9t-33-9z" fill="url(#gTrash)"/><path d="M22 18q2 12 43 13 41-1 43-13" fill="none" stroke="#b4b8ba" stroke-width="1.500"/><path d="M32 108q3 9 33 9t33-9q-12 3-33 3t-33-3z" fill="#a0a4a7" opacity=".6"/></svg>
</footer>
</div>
</body>
</html>
```
FILE: styles.css
```css
* { box-sizing: border-box; margin: 0; padding: 0; }

body {
  width: 4096px;
  height: 2304px;
  overflow: hidden;
}
.desktop {
  width: 4480px;
  height: 2520px;
  zoom: 0.914285;
  overflow: hidden;
  display: flex;
  flex-direction: column;
  align-items: center;
  font-family: Inter, "Liberation Sans", sans-serif;
  background:
    linear-gradient(90deg, #24303c 0, #6f6c99 15%, #7a77a5 55%, #4b5784 75%, #22303a 100%) 0 0 / 100% 50px no-repeat,
    linear-gradient(90deg, #0f1512 0, #1d2721 8%, #2e3a3a 26%, #333f3f 38%, #454f5e 44%, #3d4a58 52%, #33423f 58%, #3a4653 64%, #26342c 74%, #1f2c28 88%, #141c14 100%);
}

.defs { position: absolute; }
svg { flex: none; display: block; overflow: visible; }

/* Menu bar */
.menubar {
  width: 100%;
  height: 48px;
  flex: none;
  display: flex;
  align-items: center;
  justify-content: space-between;
  padding: 0 37px 0 40px;
  background: #202020;
  color: #fff;
  font-size: 26px;
  line-height: 48px;
  white-space: nowrap;
}
.apple { margin-top: -2px; }
.menus {
  display: grid;
  grid-template-columns: 119px 84px 88px 100px 128px 176px 140px 137px 60px;
  margin: -1px auto 0 40px;
  font-weight: 500;
  letter-spacing: -0.6px;
}
.app-name { font-weight: 700; letter-spacing: 0; }
.status { display: flex; align-items: center; color: #e8e8e8; }
.w18 { width: 18px; }
.w24 { width: 24px; }
.w27 { width: 27px; }
.w29 { width: 29px; }
.w34 { width: 34px; }
.w36 { width: 36px; }
.w38 { width: 38px; }
.w40 { width: 40px; }
.ml36 { margin-left: 36px; }
.ml38 { margin-left: 38px; }
.ml40 { margin-left: 40px; }
.ml42 { margin-left: 42px; }
.ml43 { margin-left: 43px; }
.ml45 { margin-left: 45px; }
.ml46 { margin-left: 46px; }
.input-src {
  width: 44px;
  height: 32px;
  margin-left: 41px;
  border-radius: 6px;
  background: #e8e8e8;
  color: #202020;
  font-size: 25px;
  font-weight: 600;
  line-height: 33px;
  text-align: center;
}
.input-name { width: 45px; margin-left: 10px; font-size: 23px; letter-spacing: -0.5px; }
.siri-mini {
  width: 28px;
  height: 28px;
  margin-left: 36px;
  border-radius: 50%;
  background:
    radial-gradient(circle at 50% 50%, #fff 0, rgba(255, 255, 255, 0.6) 18%, transparent 42%),
    conic-gradient(#3fae8a, #1d8f86 25%, #2a6fd0 40%, #2c57c8 55%, #7b3fb0 65%, #e0406f 78%, #b34c78 90%, #3fae8a);
}
.date { width: 108px; margin-left: 32px; letter-spacing: -0.2px; }
.time { width: 71px; margin-left: 16px; letter-spacing: 0.1px; }

/* Browser window */
.window {
  position: relative;
  width: 100%;
  height: 2306px;
  flex: none;
  margin-top: 2px;
  border-radius: 20px;
  background: #fff;
  box-shadow: 0 0 0 1px #000, 0 0 40px 10px rgba(0, 0, 0, 0.55);
  overflow: hidden;
}
.chrome {
  height: 162px;
  background: #262626;
  border: 1px solid #5c5c5c;
  border-top: 2.2px solid #6a6a6a;
  border-bottom: 1px solid #cdbfc0;
  border-radius: 20px 20px 0 0;
}
.toolbar { height: 102px; display: flex; align-items: center; padding: 0 38px 1px 39px; }
.light { width: 24px; height: 24px; border-radius: 50%; margin-right: 16px; }
.red { background: #ff5f57; }
.amber { background: #febc2e; }
.green { background: #28c840; }
.sidebar { margin-left: 36px; margin-top: -3px; }
.rule { width: 2px; height: 36px; margin-left: 14px; background: #3b3b3b; }
.chev { margin-left: 12px; }
.back { margin-left: 52px; margin-top: -2px; }
.fwd { margin-left: 55px; margin-top: -2px; }
.brick { margin-left: 700px; }
.camel { margin-left: 36px; }
.museum { margin-left: 39px; }
.address {
  width: 1821px;
  height: 56px;
  margin-left: 28px;
  margin-top: 1px;
  display: flex;
  align-items: center;
  padding: 0 10px 0 257px;
  border: 2.2px solid #404040;
  border-radius: 14px;
}
.url {
  width: 1277px;
  margin-left: 13px;
  font-size: 26px;
  color: #dcdcdc;
  white-space: nowrap;
  letter-spacing: -0.33px;
}
.url b { font-weight: 500; color: #fff; }
.translate { margin-left: 167px; }
.reload { margin-left: 13px; }
.share { margin-left: auto; margin-top: -4px; }
.plus { margin-left: 43px; margin-top: -2px; }
.overview { margin-left: 43px; margin-top: -2px; }

.tabs { display: grid; grid-template-columns: repeat(9, 1fr); height: 57px; }
.tab {
  display: flex;
  align-items: center;
  justify-content: center;
  gap: 9px;
  padding-top: 2px;
  padding-left: 3px;
  background: #161616;
  border-top: 1px solid #000;
  border-bottom: 1px solid #000;
  border-right: 2.2px solid #343434;
  color: #8f8f8f;
  font-size: 22px;
  letter-spacing: -0.02px;
  white-space: nowrap;
}
.tab:last-child { border-right: 0; }
.tab.cut { justify-content: flex-start; padding-left: 45px; letter-spacing: -0.37px; }
.tab.active { background: #262626; border-top-color: #262626; color: #fff; font-weight: 500; letter-spacing: -0.25px; }
.letter {
  width: 32px;
  height: 32px;
  border-radius: 6px;
  background: #8f909d;
  color: #fff;
  font: 600 21px/32px Inter, sans-serif;
  text-align: center;
}
.boot { width: 36px; height: 36px; border-radius: 7px; border: 2.2px solid #e4e4e4; background: #563d7c; }

/* Web page */
.navbar {
  height: 110px;
  display: flex;
  align-items: center;
  gap: 40px;
  padding: 0 64px 0 62px;
  background: #f8f9fb;
  color: #1b1c1d;
  font-size: 40px;
  letter-spacing: -1.6px;
}
.page { padding: 0 568px; color: #212529; font-size: 32px; line-height: 48px; }
h1 {
  margin-top: 50px;
  padding-right: 2px;
  font-size: 80px;
  font-weight: 700;
  line-height: 96px;
  text-align: center;
  letter-spacing: -2.1px;
}
.page p { margin-top: 47px; margin-bottom: 95px; text-align: center; letter-spacing: -0.56px; }
.row { display: grid; grid-template-columns: 1fr 1fr; gap: 60px; }
.field { display: flex; flex-direction: column; padding-bottom: 15px; letter-spacing: -0.85px; }
label { padding-top: 1px; }
input, .area {
  width: 100%;
  height: 76px;
  border: 2.2px solid #ced4da;
  border-radius: 8px;
  background: #fff;
}
.area { height: 124px; display: flex; align-items: flex-end; justify-content: flex-end; padding: 2px; }
button {
  width: 126px;
  height: 76px;
  border: 0;
  border-radius: 8px;
  background: #007bff;
  color: #fff;
  font: 32px/76px Inter, sans-serif;
  padding-top: 1px;
  letter-spacing: -0.6px;
}
.cursor { position: absolute; left: 2342px; top: 1478px; }

/* Dock */
.dock {
  position: relative;
  width: 4254px;
  height: 152px;
  flex: none;
  margin-top: 2px;
  display: flex;
  padding: 0 4px 0 3px;
  border: 2.2px solid #474747;
  border-radius: 46px;
  background: #202020;
  box-shadow: 0 0 0 1px #060606, 0 0 100px -8px rgba(0, 0, 0, 0.3);
}
.app {
  width: 129px;
  flex: none;
  display: flex;
  flex-direction: column;
  align-items: center;
  padding-top: 20px;
}
.app > svg { width: 98px; height: 98px; }
.app.running::after {
  content: "";
  width: 8px;
  height: 8px;
  margin-top: 20px;
  border-radius: 50%;
  background: #9a9a9a;
}
.sep { width: 2px; height: 112px; margin: 18px 28px 0; flex: none; background: #5c5c5c; }
.stack { width: 129px; height: 130px; margin-top: 6px; }
.petals { isolation: isolate; }
.petals rect { mix-blend-mode: multiply; opacity: 0.92; }
.mono { font-family: "DejaVu Sans Mono", monospace; }
```
